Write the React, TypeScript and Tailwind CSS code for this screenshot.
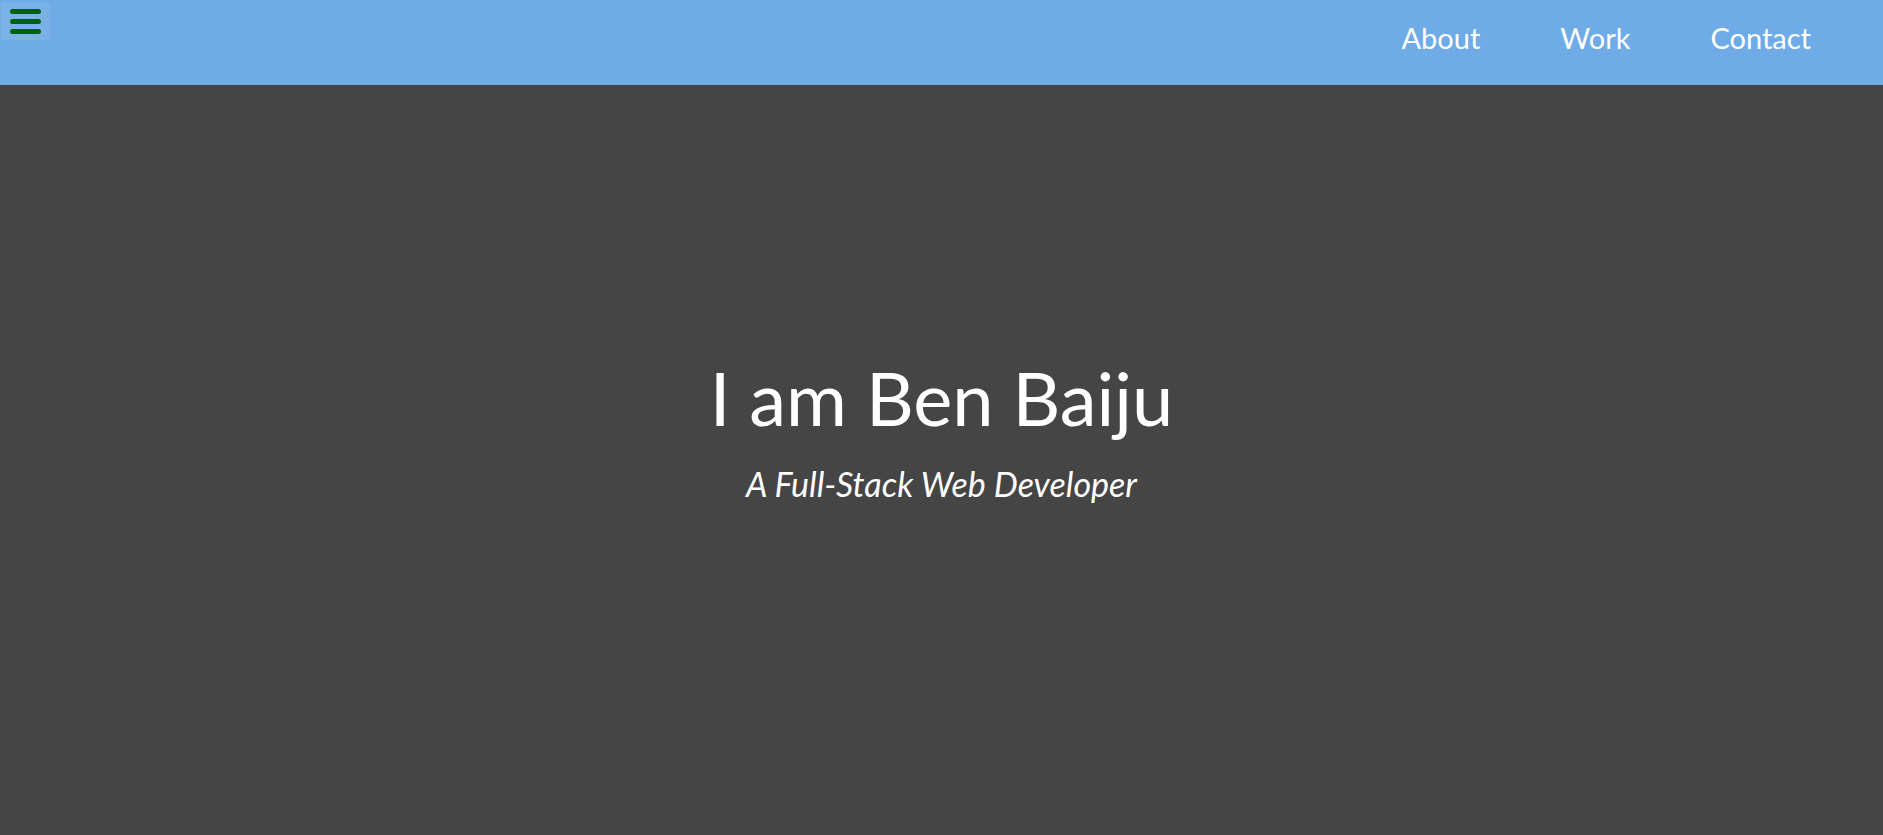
import React from "react";

export default function App() {
  return (
    <div className="w-full h-[835px] bg-[#454545] flex flex-col overflow-hidden" style={{ fontFamily: "Lato, 'Open Sans', sans-serif" }}>
      <header className="h-[85px] bg-[#6fabe6] flex items-start justify-between shrink-0">
        <button className="mt-[3px] ml-[1px] w-[49px] h-[37px] bg-[#7ab2e8] flex flex-col items-center justify-center gap-[5px]">
          <span className="block w-[31px] h-[5px] rounded-full bg-[#006400]" />
          <span className="block w-[31px] h-[5px] rounded-full bg-[#006400]" />
          <span className="block w-[31px] h-[5px] rounded-full bg-[#006400]" />
        </button>
        <nav className="flex items-center h-[75px] pr-[72px] text-white text-[29px] gap-[80px]">
          <a>About</a>
          <a>Work</a>
          <a>Contact</a>
        </nav>
      </header>
      <main className="flex-1 flex flex-col items-center pt-[276px] text-white">
        <h1 className="text-[74px] leading-[1] font-normal">I am Ben Baiju</h1>
        <p className="mt-[32px] text-[34px] italic leading-[1]">A Full-Stack Web Developer</p>
      </main>
    </div>
  );
}
